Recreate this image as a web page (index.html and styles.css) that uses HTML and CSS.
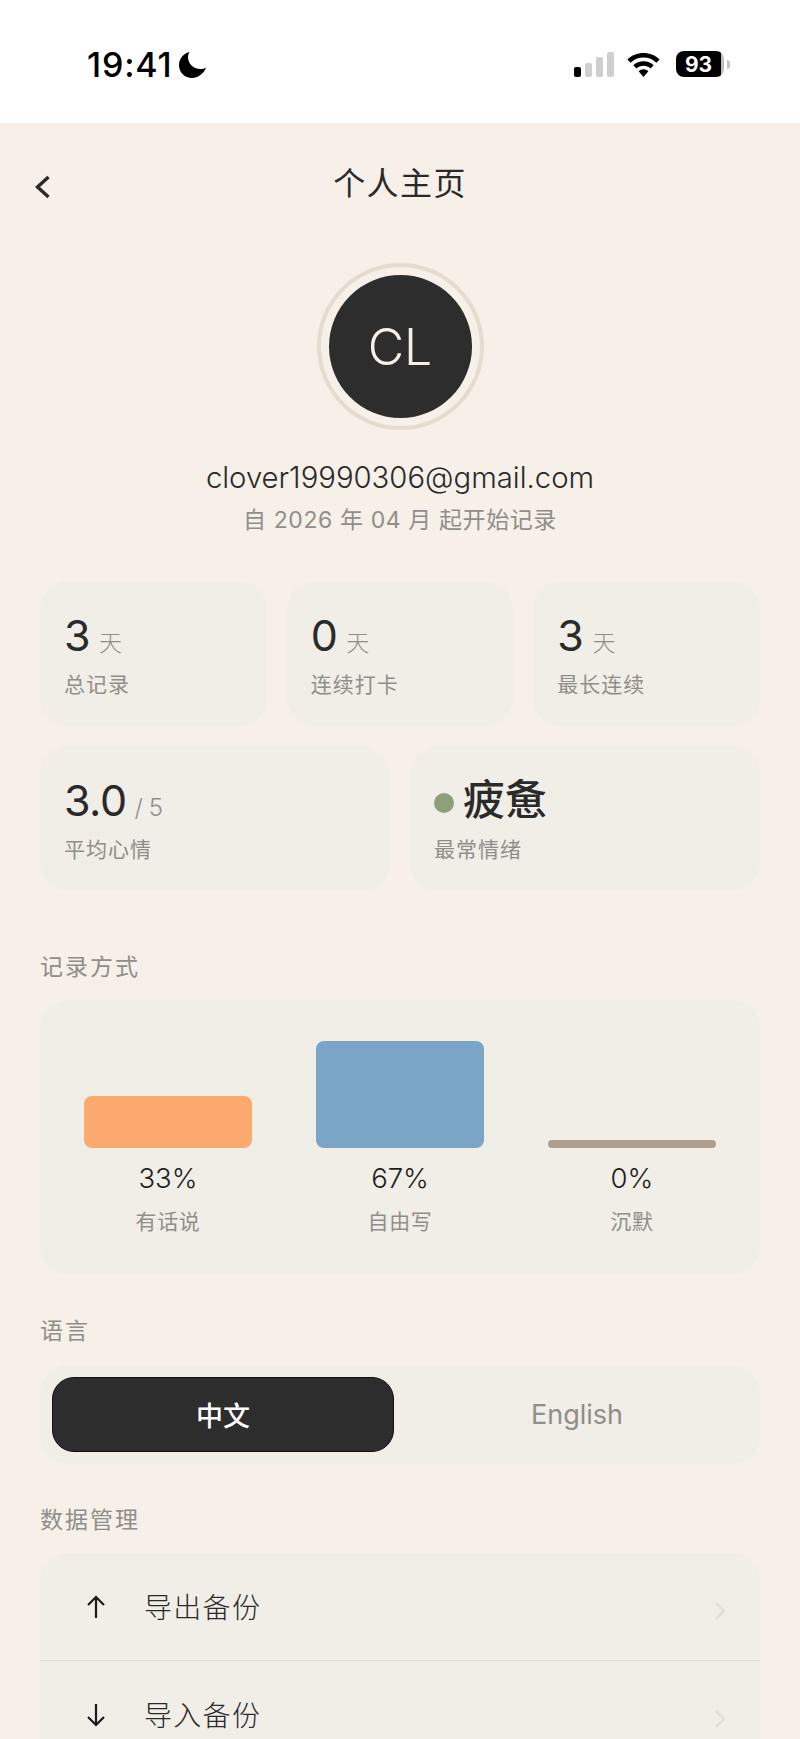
FILE: index.html
```html
<!DOCTYPE html>
<html lang="zh-CN">
<head>
    <meta charset="UTF-8">
    <meta name="viewport" content="width=device-width, initial-scale=1.0">
    <title>个人主页</title>
    <link rel="stylesheet" href="styles.css">
</head>
<body>
    <div class="status-bar">
        <div class="status-left">
            <span class="clock">19:41</span>
            <svg class="moon" viewBox="0 0 27 26"><path d="M10.5 0C4.2 1.6 0 7 0 13.2 0 20.4 5.8 26 13 26c6.200 0 11.600-4.200 14-10.200-1.600.8-3.600 1.200-5.600 1.200C14.400 17 9 11.600 9 5c0-1.800.5-3.400 1.500-5z"/></svg>
        </div>
        <div class="status-right">
            <div class="signal">
                <span class="sig sig-1"></span>
                <span class="sig sig-2"></span>
                <span class="sig sig-3"></span>
                <span class="sig sig-4"></span>
            </div>
            <svg class="wifi" viewBox="0 0 33 24"><path d="M16.500 0C10.300 0 4.600 2.400.4 6.400l3.200 3.300C7 6.500 11.500 4.600 16.500 4.600s9.500 1.900 12.900 5.100l3.200-3.300C28.400 2.400 22.700 0 16.500 0z"/><path d="M16.500 8.200c-3.900 0-7.500 1.500-10.200 4.100l3.200 3.300c1.800-1.800 4.300-2.800 7-2.800s5.200 1 7 2.800l3.200-3.300c-2.700-2.600-6.300-4.100-10.200-4.100z"/><path d="M16.500 16.300c-1.900 0-3.600.7-4.900 2l4.900 5.700 4.900-5.700c-1.300-1.300-3-2-4.900-2z"/></svg>
            <div class="battery">
                <div class="battery-body"><span class="battery-num">93</span></div>
                <span class="battery-nub"></span>
            </div>
        </div>
    </div>

    <div class="page">
        <div class="topbar">
            <svg class="back" viewBox="0 0 18 24"><path d="M14.500 2 3.500 12 14.500 22"/></svg>
            <h1 class="title">个人主页</h1>
        </div>

        <div class="profile">
            <div class="avatar-ring">
                <div class="avatar">CL</div>
            </div>
            <div class="email">clover19990306@gmail.com</div>
            <div class="since">自 2026 年 04 月 起开始记录</div>
        </div>

        <div class="stats stats-three">
            <div class="card stat">
                <div class="stat-value">3<span class="unit">天</span></div>
                <div class="stat-label">总记录</div>
            </div>
            <div class="card stat">
                <div class="stat-value">0<span class="unit">天</span></div>
                <div class="stat-label">连续打卡</div>
            </div>
            <div class="card stat">
                <div class="stat-value">3<span class="unit">天</span></div>
                <div class="stat-label">最长连续</div>
            </div>
        </div>
        <div class="stats stats-two">
            <div class="card stat">
                <div class="stat-value">3.0<span class="unit unit-latin">/ 5</span></div>
                <div class="stat-label">平均心情</div>
            </div>
            <div class="card stat">
                <div class="stat-value mood"><span class="mood-dot"></span>疲惫</div>
                <div class="stat-label">最常情绪</div>
            </div>
        </div>

        <h2 class="section-label section-first">记录方式</h2>
        <div class="card chart">
            <div class="chart-col">
                <div class="bar-area"><div class="bar bar-talk"></div></div>
                <div class="pct">33%</div>
                <div class="bar-label">有话说</div>
            </div>
            <div class="chart-col">
                <div class="bar-area"><div class="bar bar-free"></div></div>
                <div class="pct">67%</div>
                <div class="bar-label">自由写</div>
            </div>
            <div class="chart-col">
                <div class="bar-area"><div class="bar bar-silent"></div></div>
                <div class="pct">0%</div>
                <div class="bar-label">沉默</div>
            </div>
        </div>

        <h2 class="section-label">语言</h2>
        <div class="card lang">
            <div class="lang-btn active">中文</div>
            <div class="lang-btn">English</div>
        </div>

        <h2 class="section-label">数据管理</h2>
        <div class="card list">
            <div class="list-row">
                <svg class="row-icon" viewBox="0 0 24 24"><path d="M12 23V2M4 10l8-8 8 8"/></svg>
                <span class="row-text">导出备份</span>
                <svg class="row-chevron" viewBox="0 0 12 18"><path d="M2 1l8 8-8 8"/></svg>
            </div>
            <div class="list-row">
                <svg class="row-icon" viewBox="0 0 24 24"><path d="M12 1v21M4 14l8 8 8-8"/></svg>
                <span class="row-text">导入备份</span>
                <svg class="row-chevron" viewBox="0 0 12 18"><path d="M2 1l8 8-8 8"/></svg>
            </div>
        </div>
    </div>
</body>
</html>
```

FILE: styles.css
```css
/* Basic Styling */
html, body {
    height: 1739px;
    overflow: hidden;
}

body {
    margin: 0;
    font-family: Inter, "Noto Sans CJK SC", sans-serif;
    background-color: #f6f0e9;
    color: #2a2a2a;
}

/* Status bar */
.status-bar {
    height: 123px;
    background-color: #ffffff;
    display: flex;
    justify-content: space-between;
    padding: 51px 70px 0 87px;
    box-sizing: border-box;
    color: #000000;
}

.status-left {
    display: flex;
    align-items: flex-start;
    gap: 7px;
}

.clock {
    font-size: 34px;
    font-weight: 500;
    line-height: 27px;
    letter-spacing: 0.8px;
}

.moon {
    width: 27px;
    height: 26px;
    margin-top: 1px;
}

.status-right {
    display: flex;
    align-items: flex-start;
}

.signal {
    display: flex;
    align-items: flex-end;
    gap: 4px;
    height: 25px;
    margin-top: 1px;
    margin-right: 13px;
}

.sig {
    width: 7px;
    border-radius: 2px;
    background-color: #cfcfcf;
}

.sig-1 { height: 10px; background-color: #000000; }
.sig-2 { height: 14px; }
.sig-3 { height: 20px; }
.sig-4 { height: 25px; }

.wifi {
    width: 33px;
    height: 24px;
    margin-top: 2px;
    margin-right: 16px;
}

.battery {
    display: flex;
    align-items: center;
    height: 26px;
}

.battery-body {
    width: 48px;
    height: 26px;
    border-radius: 8px;
    background: linear-gradient(to right, #000000 93%, #bdbdbd 93%);
    display: flex;
    align-items: center;
    justify-content: center;
}

.battery-num {
    color: #ffffff;
    font-size: 21px;
    font-weight: 700;
    margin-right: 3px;
}

.battery-nub {
    width: 3px;
    height: 9px;
    margin-left: 3px;
    border-radius: 0 3px 3px 0;
    background-color: #c4c4c4;
}

/* Page */
.page {
    padding: 0 40px;
}

.topbar {
    height: 122px;
    position: relative;
    display: flex;
    align-items: center;
    justify-content: center;
}

.back {
    position: absolute;
    left: -6px;
    top: 52px;
    width: 18px;
    height: 24px;
    fill: none;
    stroke: #2a2a2a;
    stroke-width: 3.4;
}

.title {
    margin: 0;
    font-size: 32px;
    font-weight: 400;
    letter-spacing: 1.4px;
    line-height: 40px;
}

/* Profile */
.profile {
    display: flex;
    flex-direction: column;
    align-items: center;
    margin-top: 18px;
}

.avatar-ring {
    width: 167px;
    height: 167px;
    box-sizing: border-box;
    border: 4px solid #e3dccf;
    border-radius: 50%;
    display: flex;
    align-items: center;
    justify-content: center;
}

.avatar {
    width: 143px;
    height: 143px;
    border-radius: 50%;
    background-color: #2d2d2d;
    color: #f6f0e9;
    font-size: 50px;
    font-weight: 300;
    display: flex;
    align-items: center;
    justify-content: center;
}

.email {
    margin-top: 28px;
    font-size: 29.3px;
    font-weight: 300;
    line-height: 40px;
}

.since {
    margin-top: 7px;
    font-size: 23px;
    line-height: 30px;
    letter-spacing: 0.6px;
    color: #8f8e8a;
}

/* Stat cards */
.card {
    background-color: #f1eee7;
    border-radius: 28px;
}

.stats {
    display: grid;
    gap: 20px;
}

.stats-three {
    grid-template-columns: repeat(3, 1fr);
    margin-top: 46px;
}

.stats-two {
    grid-template-columns: repeat(2, 1fr);
    margin-top: 20px;
}

.stat {
    padding: 24px 24px 26px;
}

.stat-value {
    font-size: 43px;
    font-weight: 400;
    line-height: 60px;
    height: 60px;
    letter-spacing: -0.5px;
}

.unit {
    margin-left: 9px;
    font-size: 23px;
    font-weight: 300;
    color: #8f8e8a;
}

.unit-latin {
    margin-left: 8px;
    font-size: 24px;
}

.mood {
    display: flex;
    align-items: center;
    gap: 9px;
    font-size: 42px;
    font-weight: 500;
    letter-spacing: 0;
}

.mood-dot {
    width: 20px;
    height: 20px;
    border-radius: 50%;
    background-color: #8e9f7c;
    margin-top: 6px;
}

.stat-label {
    margin-top: 5px;
    font-size: 21px;
    line-height: 30px;
    letter-spacing: 1px;
    color: #8f8e8a;
}

/* Sections */
.section-label {
    margin: 41px 0 19px;
    font-size: 23px;
    font-weight: 400;
    line-height: 30px;
    letter-spacing: 2px;
    color: #8f8e8a;
}

.section-first {
    margin-top: 61px;
    margin-bottom: 18px;
}

/* Chart */
.chart {
    display: grid;
    grid-template-columns: repeat(3, 1fr);
    column-gap: 64px;
    padding: 41px 44px 38px;
}

.chart-col {
    text-align: center;
}

.bar-area {
    height: 107px;
    display: flex;
    align-items: flex-end;
}

.bar {
    width: 100%;
    border-radius: 8px;
}

.bar-talk { height: 52px; background-color: #fba96d; }
.bar-free { height: 107px; background-color: #7ba5c7; }
.bar-silent { height: 8px; background-color: #b09f8e; }

.pct {
    margin-top: 12px;
    font-size: 27.5px;
    font-weight: 300;
    line-height: 36px;
    color: #1f1f1f;
}

.bar-label {
    margin-top: 11px;
    font-size: 21px;
    line-height: 30px;
    letter-spacing: 0.7px;
    color: #8f8e8a;
}

/* Language switch */
.lang {
    display: grid;
    grid-template-columns: 1fr 1fr;
    gap: 12px;
    padding: 12px;
}

.lang-btn {
    height: 75px;
    border-radius: 22px;
    display: flex;
    align-items: center;
    justify-content: center;
    font-size: 27px;
    color: #8f8e8a;
}

.lang-btn.active {
    box-sizing: border-box;
    background-color: #2d2d2d;
    border: 1px solid #111111;
    color: #ffffff;
    font-weight: 500;
}

/* Data list */
.section-label + .list {
    margin-top: -1px;
}

.list {
    border-radius: 28px 28px 0 0;
}

.list-row {
    height: 107px;
    display: flex;
    align-items: center;
    padding: 0 34px 0 44px;
}

.list-row + .list-row {
    border-top: 1px solid #e6dccf;
}

.row-icon {
    width: 24px;
    height: 24px;
    fill: none;
    stroke: #1a1a1a;
    stroke-width: 2.200;
}

.row-text {
    margin-left: 36px;
    margin-bottom: 2px;
    flex: 1;
    font-size: 28px;
    font-weight: 300;
    letter-spacing: 1.3px;
}

.row-chevron {
    width: 12px;
    height: 18px;
    margin-top: 8px;
    fill: none;
    stroke: #e6dfd3;
    stroke-width: 2.500;
}
```
